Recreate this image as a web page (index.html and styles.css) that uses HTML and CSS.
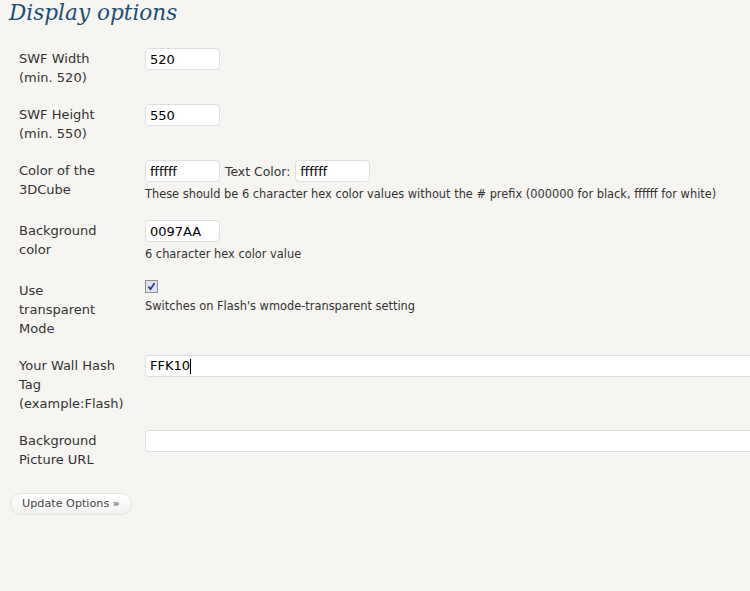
FILE: index.html
```html
<!DOCTYPE html>
<html>
<head>
<meta charset="utf-8">
<link rel="stylesheet" href="styles.css">
</head>
<body>
<div class="wrap">
  <h2 class="title">Display options</h2>
  <table class="form-table">
    <colgroup><col class="col-th"><col class="col-td"></colgroup>
    <tr>
      <th>SWF Width<br>(min. 520)</th>
      <td><input class="small" type="text" value="520"></td>
    </tr>
    <tr>
      <th>SWF Height<br>(min. 550)</th>
      <td><input class="small" type="text" value="550"></td>
    </tr>
    <tr>
      <th>Color of the 3DCube</th>
      <td>
        <div class="inline"><input class="small" type="text" value="ffffff"><span class="inl-label">Text Color:</span><input class="small" type="text" value="ffffff"></div>
        <div class="desc">These should be 6 character hex color values without the # prefix (000000 for black, ffffff for white)</div>
      </td>
    </tr>
    <tr>
      <th>Background color</th>
      <td>
        <input class="small" type="text" value="0097AA">
        <div class="desc">6 character hex color value</div>
      </td>
    </tr>
    <tr>
      <th>Use transparent Mode</th>
      <td>
        <span class="check"><svg width="13" height="13" viewBox="0 0 13 13"><rect x="0.5" y="0.5" width="12" height="12" fill="#dfe3ee" stroke="#8f8f8f"/><path d="M3.5 6.5 L5.5 9.2 L9.6 3" fill="none" stroke="#2a3f9a" stroke-width="1.8"/></svg></span>
        <div class="desc desc-check">Switches on Flash's wmode-transparent setting</div>
      </td>
    </tr>
    <tr>
      <th>Your Wall Hash Tag (example:Flash)</th>
      <td><div class="wide"><span>FFK10</span><span class="caret"></span></div></td>
    </tr>
    <tr>
      <th>Background Picture URL</th>
      <td><div class="wide"></div></td>
    </tr>
  </table>
  <div class="submit"><button class="button" type="button">Update Options »</button></div>
</div>
</body>
</html>
```

FILE: styles.css
```css
html, body {
  margin: 0;
  padding: 0;
  background: #f6f5f1;
  overflow: hidden;
}
body {
  font-family: "DejaVu Sans", Verdana, sans-serif;
  color: #333333;
  width: 750px;
  height: 591px;
}
.wrap {
  padding: 0 0 0 9px;
  width: 741px;
  overflow: hidden;
}
.title {
  margin: 0;
  font-family: "DejaVu Serif", Georgia, serif;
  font-style: italic;
  font-weight: normal;
  font-size: 21.6px;
  line-height: 26px;
  color: #1d4d73;
  padding-top: 0;
  height: 40px;
}
.form-table {
  border-collapse: collapse;
  table-layout: fixed;
  width: 900px;
}
.col-th {
  width: 126px;
}
.form-table th {
  text-align: left;
  vertical-align: top;
  font-weight: normal;
  font-size: 13px;
  line-height: 19px;
  padding: 9px 14px 9px 10px;
  overflow: visible;
}
.form-table td {
  vertical-align: top;
  padding: 8px 0 8px 10px;
  font-size: 11.4px;
}
input.small {
  box-sizing: border-box;
  width: 75px;
  height: 22px;
  border: 1px solid #dfdfdf;
  border-radius: 4px;
  background: #fff;
  font-family: "DejaVu Sans", Verdana, sans-serif;
  font-size: 13px;
  color: #000;
  padding: 0 4px;
  margin: 0;
  vertical-align: top;
}
.inline {
  display: flex;
  align-items: center;
  height: 22px;
}
.inl-label {
  font-size: 12.4px;
  margin: 0 5px 0 5px;
}
.desc {
  font-size: 11.4px;
  line-height: 14px;
  margin-top: 5px;
  margin-bottom: 3px;
}
.desc-check {
  margin-top: 6px;
}
.check {
  display: block;
  height: 13px;
  line-height: 0;
  margin-top: 0;
}
.wide {
  box-sizing: border-box;
  width: 700px;
  height: 22px;
  border: 1px solid #dfdfdf;
  border-right: 0;
  border-radius: 4px 0 0 4px;
  background: #fff;
  font-size: 13px;
  line-height: 20px;
  color: #000;
  padding: 0 4px;
  display: flex;
  align-items: center;
}
.caret {
  display: inline-block;
  width: 1px;
  height: 15px;
  background: #000;
}
.submit {
  padding: 14px 0 0 1px;
}
.button {
  font-family: "DejaVu Sans", Verdana, sans-serif;
  font-size: 11.2px;
  color: #464646;
  background: linear-gradient(#ffffff, #f2f2f2);
  border: 1px solid #e3e3e3;
  border-radius: 11px;
  height: 22px;
  padding: 0 11px;
  margin: 0;
}
```
